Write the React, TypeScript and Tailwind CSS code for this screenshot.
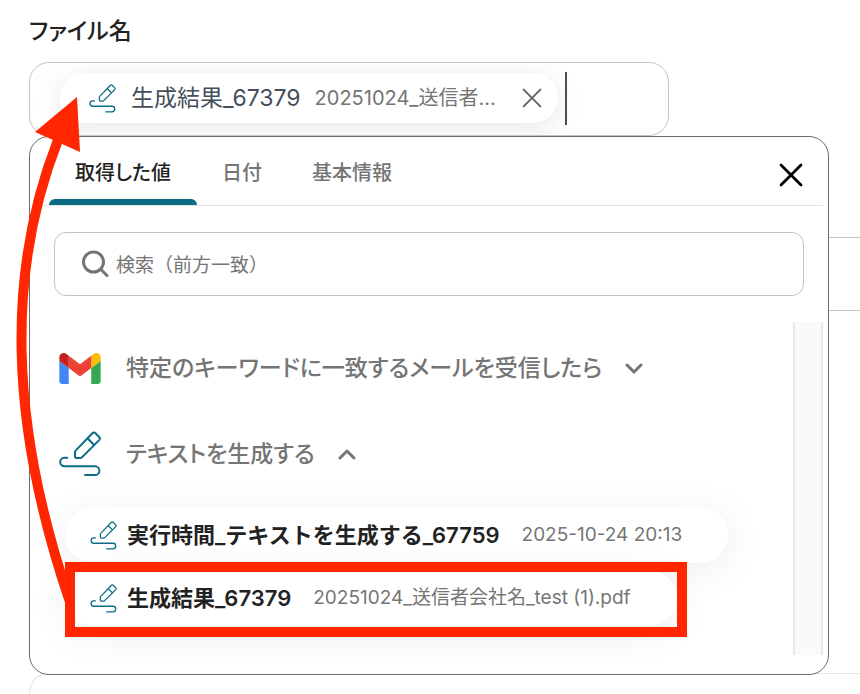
import { useState } from "react"

const tabs = ["取得した値", "日付", "基本情報"]

const results = [
    { name: "実行時間_テキストを生成する_67759", value: "2025-10-24 20:13", marked: false },
    { name: "生成結果_67379", value: "20251024_送信者会社名_test (1).pdf", marked: true },
]

function PenIcon({ className }: { className: string }) {
    return (
        <svg viewBox="0 0 42 46" className={className} fill="none" stroke="#0a6c85" strokeWidth="2" strokeLinecap="round" strokeLinejoin="round">
            <path d="M17.5 27h4a2 2 0 0 0 1.4-.6L40.4 8.9a1.9 1.9 0 0 0 0-2.7L36.3 2a1.9 1.9 0 0 0-2.7 0L16.6 19.6a2 2 0 0 0-.6 1.4v4.5a1.5 1.5 0 0 0 1.5 1.5z" />
            <path d="M28.7 7.5l6.2 6.2" />
            <path d="M8.3 26.7H5.5a4.3 4.3 0 0 0 0 8.6H36a4.4 4.4 0 0 1 0 8.8H26" />
        </svg>
    )
}

function GmailIcon() {
    return (
        <svg viewBox="52 42 88 66" className="h-[31px] w-[42px] shrink-0">
            <path fill="#4285f4" d="M58 108h14V74L52 59v43c0 3.32 2.69 6 6 6" />
            <path fill="#34a853" d="M120 108h14c3.32 0 6-2.69 6-6V59l-20 15" />
            <path fill="#fbbc04" d="M120 48v26l20-15v-8c0-7.42-8.47-11.65-14.4-7.2" />
            <path fill="#ea4335" d="M72 74V48l24 18 24-18v26L96 92" />
            <path fill="#c5221f" d="M52 51v8l20 15V48l-5.6-4.2c-5.94-4.45-14.4-.22-14.4 7.2" />
        </svg>
    )
}

function CrossIcon({ className }: { className: string }) {
    return (
        <svg viewBox="0 0 24 24" className={className} fill="none" stroke="currentColor" strokeLinecap="round">
            <path d="M2 2l20 20M22 2L2 22" />
        </svg>
    )
}

function Chevron({ open }: { open: boolean }) {
    return (
        <svg viewBox="0 0 18 12" className="h-3 w-[18px]" fill="none" stroke="currentColor" strokeWidth="3" strokeLinecap="round" strokeLinejoin="round">
            <path d={open ? "M2 10l7-7 7 7" : "M2 3l7 7 7-7"} />
        </svg>
    )
}

export default function App() {
    const [tab, setTab] = useState(0)
    const [query, setQuery] = useState("")

    return (
        <main className="relative h-screen overflow-hidden bg-white pt-4 pl-[29px] font-['Inter','Noto_Sans_CJK_JP',sans-serif]" lang="ja">
            <label htmlFor="filename" className="block h-[46px] text-[23px] leading-[30px] font-medium text-[#222] [font-feature-settings:'palt']">
                ファイル名
            </label>
            <div className="relative mr-[30px]">
                <div className="flex h-[74px] max-w-[640px] items-center overflow-hidden rounded-[20px] border border-[#c4c4c4] pb-0.5 pl-[30px]">
                    <div className="flex h-[50px] shrink-0 items-center rounded-full bg-white pr-2.5 pl-[29px] shadow-[0_6px_30px_rgba(0,0,0,0.1)]">
                        <PenIcon className="h-[29px] w-[27px] shrink-0" />
                        <span className="ml-[15px] text-[23px] leading-8 text-[#454f5b]">生成結果_67379</span>
                        <span className="ml-3.5 text-[20px] leading-8 text-[#757575]">20251024_送信者...</span>
                        <button aria-label="削除" className="ml-5 flex size-8 items-center justify-center text-[#666]">
                            <CrossIcon className="size-5 stroke-[2.4]" />
                        </button>
                    </div>
                    <span className="ml-[7px] h-[53px] w-0.5 shrink-0 bg-[#454f5b]" />
                    <input id="filename" className="h-full w-20 min-w-0 flex-1 outline-none" />
                </div>

                <section className="absolute top-[74px] left-0 z-10 w-full max-w-[800px] rounded-[20px] border border-[#6b6b6b] bg-white">
                    <div className="mx-[5px] flex h-[69px] items-center border-b border-[#e2e2e2] pr-4 pl-3.5">
                        {tabs.map((t, i) => (
                            <button
                                key={t}
                                onClick={() => setTab(i)}
                                className={
                                    i === tab
                                        ? "relative h-[68px] px-[26px] pt-1 text-[20px] font-medium text-[#222] [font-feature-settings:'palt'] after:absolute after:inset-x-0 after:bottom-0 after:h-1.5 after:rounded-t-md after:bg-[#0a6c85]"
                                        : "h-[68px] px-[25px] pt-1 text-[20px] font-medium text-[#757575] [font-feature-settings:'palt']"
                                }
                            >
                                {t}
                            </button>
                        ))}
                        <button aria-label="閉じる" className="mt-2 ml-auto flex size-8 items-center justify-center text-black">
                            <CrossIcon className="size-6 stroke-[2.8]" />
                        </button>
                    </div>

                    <div className="mx-6 mt-[26px] flex h-16 items-center rounded-xl border border-[#c4c4c4] pl-[26px] text-[#757575]">
                        <svg viewBox="0 0 28 28" className="size-7 shrink-0" fill="none" stroke="currentColor" strokeWidth="3" strokeLinecap="round">
                            <circle cx="12.5" cy="12" r="10" />
                            <path d="M20 19.5l6 6" />
                        </svg>
                        <input
                            aria-label="検索"
                            value={query}
                            onChange={(e) => setQuery(e.target.value)}
                            placeholder="検索（前方一致）"
                            className="ml-[7px] min-w-0 flex-1 pt-1 text-[19px] outline-none placeholder:text-[#757575]"
                        />
                    </div>

                    <div className="mt-[26px] mr-[5px] mb-[19px] flex h-[333px]">
                        <div className="min-w-0 flex-1 pt-[3px] pl-[29px] text-[#757575]">
                            <button className="flex h-[86px] items-center text-[23px] font-medium whitespace-nowrap [font-feature-settings:'palt']">
                                <GmailIcon />
                                <span className="mr-[23px] ml-[25px]">特定のキーワードに一致するメールを受信したら</span>
                                <Chevron open={false} />
                            </button>
                            <button className="flex h-[86px] items-center text-[23px] font-medium whitespace-nowrap [font-feature-settings:'palt']">
                                <PenIcon className="h-[46px] w-[42px] shrink-0" />
                                <span className="mr-[23px] ml-[25px]">テキストを生成する</span>
                                <Chevron open={true} />
                            </button>
                            <ul className="mt-2.5 ml-1.5 flex flex-col items-start gap-[7px]">
                                {results.map((r) => (
                                    <li key={r.name} className="relative">
                                        <button className="flex h-14 items-center rounded-full bg-white pr-[46px] pl-[25px] whitespace-nowrap shadow-[0_6px_40px_rgba(0,0,0,0.08)]">
                                            <PenIcon className="h-[29px] w-[27px] shrink-0" />
                                            <span className="ml-2.5 text-[22px] font-semibold text-[#222]">{r.name}</span>
                                            <span className="ml-[22px] text-[19px]">{r.value}</span>
                                        </button>
                                        {r.marked && <div className="absolute -top-2 -right-2.5 -bottom-[11px] left-0 border-10 border-[#ff2600]" />}
                                    </li>
                                ))}
                            </ul>
                        </div>
                        <div className="w-[30px] border-x-2 border-[#e8e8e8] bg-[#fafafa]" />
                    </div>
                </section>
            </div>

            <div className="mt-[101px] h-[74px] rounded-l-[20px] border border-r-0 border-[#c4c4c4]" />
            <div className="mt-[362px] h-20 rounded-l-[20px] border border-r-0 border-[#e2e2e2]" />

            <svg viewBox="0 0 100 620" className="pointer-events-none absolute top-0 left-0 z-20 h-[620px] w-[100px]" fill="none">
                <path d="M70 602C8 420 7 270 58 140" stroke="#ff2600" strokeWidth="10" />
                <path d="M77 97L35 132L80 152Z" fill="#ff2600" />
            </svg>
        </main>
    )
}
